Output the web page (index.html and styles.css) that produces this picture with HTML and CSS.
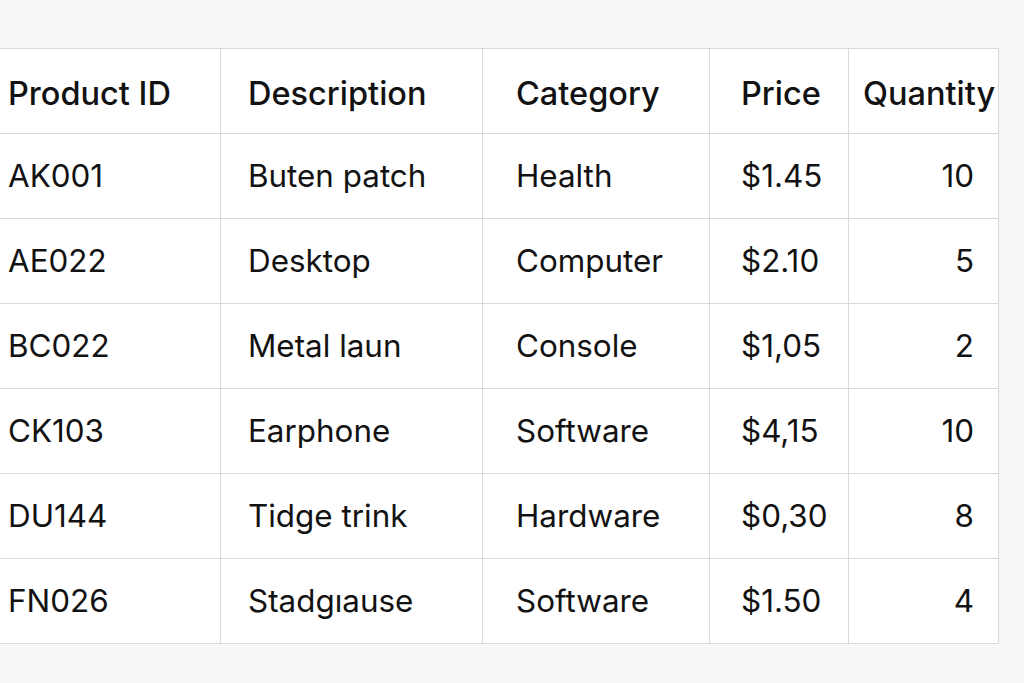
FILE: index.html
```html
<!DOCTYPE html>
<html>
<head>
<meta charset="utf-8">
<link rel="stylesheet" href="styles.css">
</head>
<body>
<main class="page">
  <table class="grid">
    <colgroup>
      <col class="c-id"><col class="c-desc"><col class="c-cat"><col class="c-price"><col class="c-qty">
    </colgroup>
    <thead>
      <tr>
        <th class="id">Product ID</th>
        <th class="desc">Description</th>
        <th class="cat">Category</th>
        <th class="price">Price</th>
        <th class="qty">Quantity</th>
      </tr>
    </thead>
    <tbody>
      <tr><td class="id">AK001</td><td class="desc">Buten patch</td><td class="cat">Health</td><td class="price">$1.45</td><td class="qty">10</td></tr>
      <tr><td class="id">AE022</td><td class="desc">Desktop</td><td class="cat">Computer</td><td class="price">$2.10</td><td class="qty">5</td></tr>
      <tr><td class="id">BC022</td><td class="desc">Metal laun</td><td class="cat">Console</td><td class="price">$1,05</td><td class="qty">2</td></tr>
      <tr><td class="id">CK103</td><td class="desc">Earphone</td><td class="cat">Software</td><td class="price">$4,15</td><td class="qty">10</td></tr>
      <tr><td class="id">DU144</td><td class="desc">Tidge trink</td><td class="cat">Hardware</td><td class="price">$0,30</td><td class="qty">8</td></tr>
      <tr><td class="id">FN026</td><td class="desc">Stadgıause</td><td class="cat">Software</td><td class="price">$1.50</td><td class="qty">4</td></tr>
    </tbody>
  </table>
</main>
</body>
</html>
```

FILE: styles.css
```css
html, body {
  margin: 0;
  padding: 0;
  background: #f9f8f6;
}
.page {
  padding-top: 48px;
  height: 683px;
  box-sizing: border-box;
  overflow: hidden;
}
.grid {
  border-collapse: collapse;
  table-layout: fixed;
  width: 999px;
  margin-left: -1px;
  background: #ffffff;
  font-family: Inter, "Liberation Sans", sans-serif;
  font-size: 31.4px;
  color: #121212;
}
.c-id { width: 221px; }
.c-desc { width: 262px; }
.c-cat { width: 227px; }
.c-price { width: 139px; }
.c-qty { width: 150px; }
.grid th, .grid td {
  border: 1px solid #d9d9d9;
  height: 85px;
  box-sizing: border-box;
  padding: 0;
  text-align: left;
  white-space: nowrap;
  overflow: visible;
  vertical-align: middle;
}
.grid th {
  font-weight: 500;
  font-size: 32.5px;
  padding-top: 5px;
}
.grid td {
  font-weight: 400;
}
.id { padding-left: 8px !important; }
.desc { padding-left: 27px !important; }
.cat { padding-left: 33px !important; }
.price { padding-left: 31px !important; }
.grid td.qty { text-align: right; padding-right: 24px; }
.grid th.qty { padding-left: 14px; }
```
